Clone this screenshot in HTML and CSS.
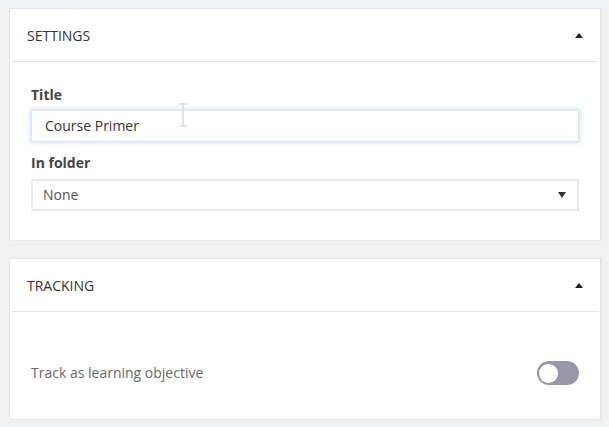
FILE: index.html
```html
<!DOCTYPE html>
<html>
<head>
<meta charset="utf-8">
<link rel="stylesheet" href="styles.css">
</head>
<body>
<div class="page">
  <section class="card">
    <div class="card-head">
      <span class="card-title">SETTINGS</span>
      <svg class="caret" width="8" height="5" viewBox="0 0 8 5"><path d="M0 5 L4 0 L8 5 Z" fill="#222"/></svg>
    </div>
    <div class="card-body settings-body">
      <label class="field-label">Title</label>
      <div class="input focused">Course Primer</div>
      <label class="field-label second">In folder</label>
      <div class="input select">
        <span>None</span>
        <svg width="8" height="6" viewBox="0 0 8 6"><path d="M0 0 L8 0 L4 6 Z" fill="#333"/></svg>
      </div>
    </div>
    <svg class="ibeam" width="10" height="24" viewBox="0 0 10 24"><path d="M1 1 H9 M5 1 V23 M1 23 H9" stroke="#dcdcdc" stroke-width="1.5" fill="none"/></svg>
  </section>
  <section class="card">
    <div class="card-head">
      <span class="card-title">TRACKING</span>
      <svg class="caret" width="8" height="5" viewBox="0 0 8 5"><path d="M0 5 L4 0 L8 5 Z" fill="#222"/></svg>
    </div>
    <div class="card-body tracking-body">
      <span class="row-label">Track as learning objective</span>
      <span class="toggle"><span class="knob"></span></span>
    </div>
  </section>
</div>
</body>
</html>
```
FILE: styles.css
```css
html, body {
  margin: 0;
  padding: 0;
  background: #f0f1f3;
  font-family: "Open Sans", "Liberation Sans", sans-serif;
}
.page {
  padding: 8px 7px 0 9px;
  display: flex;
  flex-direction: column;
  gap: 17px;
}
.card {
  position: relative;
  background: #fff;
  border: 1px solid #e4e5e9;
  border-right-width: 2px;
}
.card-head {
  height: 52px;
  box-sizing: border-box;
  margin: 0 2px;
  border-bottom: 1px solid #e2e3e6;
  display: flex;
  align-items: center;
  justify-content: space-between;
  padding: 2px 15px 0 15px;
  height: 53px;
}
.card-title {
  font-size: 14px;
  line-height: 20px;
  color: #333;
}
.caret {
  display: block;
  margin-top: -1px;
}
.card-body {
  padding: 0 21px;
}
.settings-body {
  display: flex;
  flex-direction: column;
  padding-top: 24px;
  padding-bottom: 29px;
}
.field-label {
  display: block;
  font-size: 14px;
  font-weight: 700;
  color: #444;
  line-height: 18px;
  margin-bottom: 6px;
}
.field-label.second {
  margin-top: 12px;
  margin-bottom: 7px;
}
.input {
  height: 32px;
  box-sizing: border-box;
  border: 2px solid #e8e9ec;
  font-size: 14px;
  line-height: 20px;
  color: #333;
  display: flex;
  align-items: center;
  padding: 0 11px 0 10px;
}
.input.focused {
  border: 1px solid #dbe7f3;
  box-shadow: 0 0 4px 1px rgba(120, 170, 230, 0.35);
  padding-left: 13px;
}
.input.select {
  justify-content: space-between;
  color: #555;
}
.ibeam {
  position: absolute;
  left: 168px;
  top: 94px;
}
.tracking-body {
  display: flex;
  align-items: center;
  justify-content: space-between;
  padding-top: 49px;
  padding-bottom: 34px;
}
.row-label {
  font-size: 14px;
  line-height: 20px;
  color: #666;
}
.toggle {
  width: 42px;
  height: 24px;
  border-radius: 12px;
  background: #9698aa;
  display: flex;
  align-items: center;
  padding: 0 2px;
  box-sizing: border-box;
}
.knob {
  width: 19px;
  height: 19px;
  border-radius: 50%;
  background: #fff;
}
```
